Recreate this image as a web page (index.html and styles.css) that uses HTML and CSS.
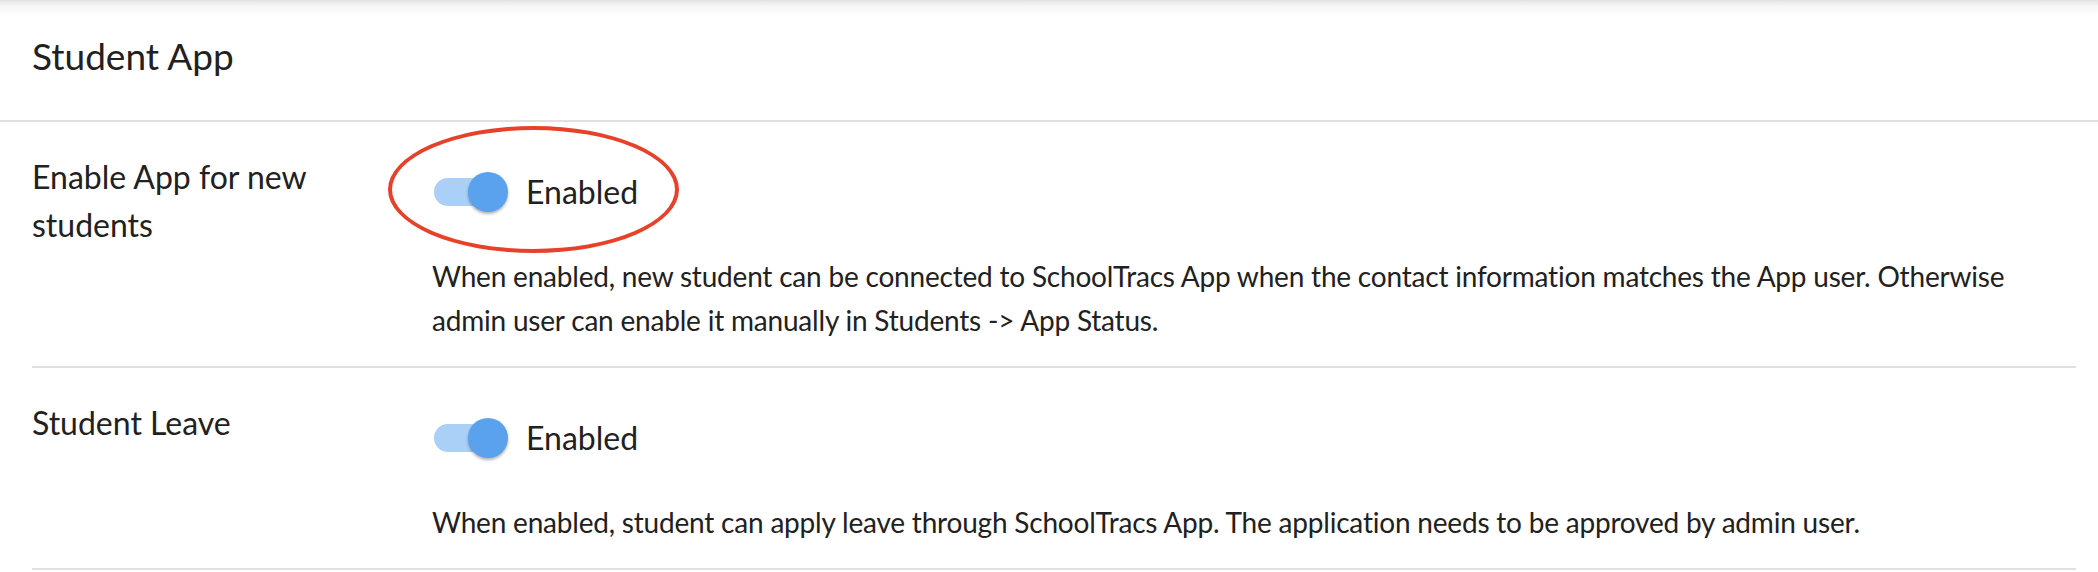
FILE: index.html
```html
<!DOCTYPE html>
<html lang="en">
<head>
<meta charset="utf-8">
<title>Student App</title>
<link rel="stylesheet" href="styles.css">
</head>
<body>
<div class="panel">
  <header class="panel-header">
    <h2 class="panel-title">Student App</h2>
  </header>
  <div class="settings">
    <div class="setting-row">
      <div class="setting-label">Enable App for new students</div>
      <div class="setting-body">
        <div class="switch-line">
          <span class="switch"><span class="switch-track"></span><span class="switch-thumb"></span></span>
          <span class="switch-text">Enabled</span>
          <span class="mark"></span>
        </div>
        <p class="setting-desc">When enabled, new student can be connected to SchoolTracs App when the contact information matches the App user. Otherwise admin user can enable it manually in Students -&gt; App Status.</p>
      </div>
    </div>
    <div class="setting-row">
      <div class="setting-label">Student Leave</div>
      <div class="setting-body">
        <div class="switch-line">
          <span class="switch"><span class="switch-track"></span><span class="switch-thumb"></span></span>
          <span class="switch-text">Enabled</span>
        </div>
        <p class="setting-desc">When enabled, student can apply leave through SchoolTracs App. The application needs to be approved by admin user.</p>
      </div>
    </div>
  </div>
</div>
</body>
</html>
```
FILE: styles.css
```css
html, body {
  margin: 0;
  padding: 0;
  background: #ffffff;
}

body {
  font-family: Lato, "Open Sans", "Liberation Sans", sans-serif;
  color: #212121;
}

.panel-header {
  background: linear-gradient(to bottom, #e2e2e2 0, #f6f6f6 6px, #ffffff 16px);
  padding: 29px 32px 37px;
  border-bottom: 2px solid #e0e0e0;
}

.panel-title {
  margin: 0;
  font-size: 37px;
  line-height: 54px;
  font-weight: 400;
}

.settings {
  margin: 0 22px 0 32px;
}

.setting-row {
  display: grid;
  grid-template-columns: 400px 1fr;
  border-bottom: 2px solid #e0e0e0;
  padding-bottom: 24px;
}

.setting-label {
  padding: 31px 24px 0 0;
  font-size: 32px;
  line-height: 48px;
}

.setting-body {
  padding: 46px 24px 0 0;
}

.switch-line {
  position: relative;
  display: flex;
  align-items: center;
  gap: 18px;
  height: 48px;
  font-size: 32px;
  line-height: 48px;
}

.switch {
  position: relative;
  flex: none;
  width: 74px;
  height: 40px;
  margin-left: 2px;
}

.switch-track {
  display: block;
  margin-top: 6px;
  width: 68px;
  height: 28px;
  border-radius: 14px;
  background: #abd0f7;
}

.switch-thumb {
  position: absolute;
  left: 34px;
  top: 0;
  width: 40px;
  height: 40px;
  border-radius: 50%;
  background: #5aa1ee;
  box-shadow: 0 2px 3px rgba(0, 0, 0, 0.3);
}

.mark {
  position: absolute;
  left: -44px;
  top: -42px;
  width: 291px;
  height: 127px;
  box-sizing: border-box;
  border: 4px solid #e8412a;
  border-radius: 50%;
  pointer-events: none;
}

.setting-desc {
  margin: 38px 0 0;
  font-size: 28px;
  line-height: 44px;
  letter-spacing: -0.2px;
}
```
